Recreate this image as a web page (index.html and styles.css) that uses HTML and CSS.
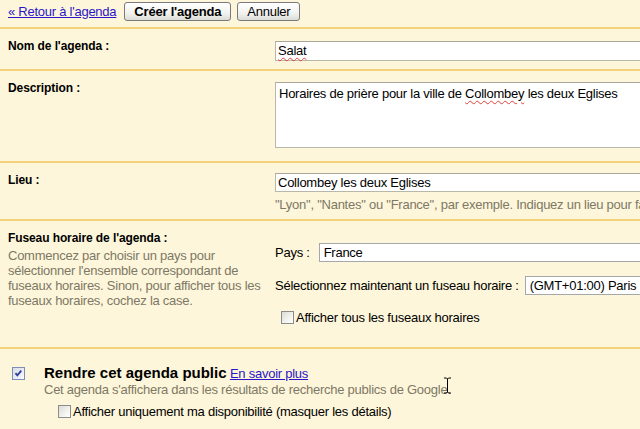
FILE: index.html
```html
<!DOCTYPE html>
<html lang="fr">
<head>
<meta charset="utf-8">
<title>Créer un agenda</title>
<link rel="stylesheet" href="styles.css">
</head>
<body>
<div class="page">
  <div class="topbar">
    <a class="back" href="#">« Retour à l'agenda</a>
    <button class="btn btn-primary">Créer l'agenda</button>
    <button class="btn btn-cancel">Annuler</button>
  </div>

  <div class="row row-name">
    <div class="label">Nom de l'agenda :</div>
    <div class="field">
      <div class="input input-name"><span class="spell">Salat</span></div>
    </div>
  </div>

  <div class="row row-desc">
    <div class="label">Description :</div>
    <div class="field">
      <div class="input textarea">Horaires de prière pour la ville de <span class="spell">Collombey</span> les deux Eglises</div>
    </div>
  </div>

  <div class="row row-place">
    <div class="label">Lieu :</div>
    <div class="field">
      <div class="input input-place">Collombey les deux Eglises</div>
      <div class="hint">"Lyon", "Nantes" ou "France", par exemple. Indiquez un lieu pour faciliter la recherche de votre agenda.</div>
    </div>
  </div>

  <div class="row row-tz">
    <div class="label-block">
      <div class="label">Fuseau horaire de l'agenda :</div>
      <p class="desc">Commencez par choisir un pays pour sélectionner l'ensemble correspondant de fuseaux horaires. Sinon, pour afficher tous les fuseaux horaires, cochez la case.</p>
    </div>
    <div class="field tz-field">
      <div class="tz-line">
        <span class="tz-label">Pays :</span>
        <div class="select select-country">France</div>
      </div>
      <div class="tz-line tz-line-2">
        <span class="tz-label tz-label-zone">Sélectionnez maintenant un fuseau horaire :</span>
        <div class="select select-zone">(GMT+01:00) Paris</div>
      </div>
      <label class="check-line all-zones">
        <span class="cb"></span>
        <span>Afficher tous les fuseaux horaires</span>
      </label>
    </div>
  </div>

  <div class="public">
    <span class="cb cb-checked">
      <svg viewBox="0 0 11 11" width="11" height="11"><path d="M2.5 5.2 L4.3 7.3 L8.3 2.6" fill="none" stroke="#2a3f9e" stroke-width="1.8"/></svg>
    </span>
    <div class="public-text">
      <div class="public-title"><strong>Rendre cet agenda public</strong> <a href="#">En savoir plus</a></div>
      <div class="public-desc">Cet agenda s'affichera dans les résultats de recherche publics de Google.</div>
      <label class="check-line busy">
        <span class="cb"></span>
        <span>Afficher uniquement ma disponibilité (masquer les détails)</span>
      </label>
    </div>
  </div>

  <svg class="cursor" width="9" height="17" viewBox="0 0 9 17"><path d="M1 1 H3.5 L4.5 2 L5.5 1 H8 M4.5 2 V15 M1 16 H3.5 L4.5 15 L5.5 16 H8" fill="none" stroke="#000" stroke-width="1"/></svg>
</div>
</body>
</html>
```

FILE: styles.css
```css
html, body {
  margin: 0;
  padding: 0;
  overflow: hidden;
  background: #fdf6da;
}

.page {
  position: relative;
  width: 640px;
  height: 429px;
  overflow: hidden;
  font-family: "Liberation Sans", Arial, sans-serif;
  font-size: 13px;
  letter-spacing: -0.25px;
  color: #000;
  background: #fdf6da;
}

.topbar {
  height: 29px;
  box-sizing: border-box;
  display: flex;
  align-items: flex-start;
  padding: 2px 0 0 8px;
  gap: 6px;
  border-bottom: 2px solid #f3d27a;
}

.back {
  color: #2a16c8;
  text-decoration: underline;
  font-size: 13px;
  margin-top: 2px;
  margin-right: 2px;
}

.btn {
  font-family: "Liberation Sans", Arial, sans-serif;
  font-size: 13px;
  letter-spacing: -0.25px;
  height: 19px;
  padding: 0 7px;
  border: 1px solid #7a7a7a;
  border-radius: 3px;
  background: linear-gradient(#ffffff, #f2f2f0 60%, #dcdcd6);
  color: #000;
  line-height: 17px;
}

.btn-primary {
  font-weight: bold;
  letter-spacing: -0.2px;
  padding: 0 9px;
}

.btn-cancel {
  padding: 0 9px;
}

.row {
  display: grid;
  grid-template-columns: 267px 1fr;
  box-sizing: border-box;
  border-bottom: 2px solid #f3d27a;
  padding-left: 8px;
}

.label {
  font-weight: bold;
  font-size: 12px;
  letter-spacing: -0.1px;
  line-height: 15px;
}

.row-name { height: 42px; padding-top: 10px; }
.row-name .field { padding-top: 2px; }

.row-desc { height: 92px; padding-top: 10px; }
.row-desc .field { padding-top: 1px; }

.row-place { height: 58px; padding-top: 10px; }

.row-tz { height: 128px; padding-top: 10px; }

.input {
  box-sizing: border-box;
  width: 420px;
  background: #fff;
  border: 1px solid #b9b7a8;
  border-top-color: #a9a797;
  padding: 1px 2px;
  line-height: 16px;
  white-space: nowrap;
}

.input-name { height: 20px; }

.textarea {
  height: 66px;
  padding: 3px 3px;
}

.input-place { height: 19px; }

.spell {
  text-decoration: underline wavy #e0413a;
  text-decoration-thickness: 1px;
  text-underline-offset: 2px;
}

.hint {
  color: #7d7866;
  margin-top: 5px;
  white-space: nowrap;
  line-height: 15px;
}

.desc {
  margin: 2px 0 0;
  color: #7d7866;
  line-height: 15px;
  width: 256px;
}

.tz-field {
  padding-top: 12px;
}

.tz-line {
  display: flex;
  align-items: center;
  white-space: nowrap;
}

.tz-label {
  margin-right: 9px;
}

.tz-label-zone {
  margin-right: 6px;
}

.select {
  box-sizing: border-box;
  height: 19px;
  background: #fff;
  border: 1px solid #a4a8ab;
  padding: 0 4px;
  line-height: 17px;
  white-space: nowrap;
}

.select-country { width: 400px; }
.select-zone { width: 200px; }

.tz-line-2 {
  margin-top: 14px;
}

.check-line {
  display: flex;
  align-items: center;
  gap: 2px;
  white-space: nowrap;
}

.all-zones {
  margin-top: 15px;
  margin-left: 6px;
}

.cb {
  display: inline-flex;
  align-items: center;
  justify-content: center;
  box-sizing: border-box;
  width: 13px;
  height: 13px;
  flex: none;
  border: 1px solid #8c8c8c;
  background: linear-gradient(135deg, #dcdcd6, #f6f6f3 70%, #ffffff);
}

.cb-checked {
  border-color: #7d8fb8;
  background: linear-gradient(135deg, #d9dde8, #eef0f6 70%, #ffffff);
}

.public {
  display: flex;
  align-items: flex-start;
  padding: 18px 0 0 12px;
  gap: 19px;
}

.public-title {
  line-height: 16px;
  margin-top: -2px;
}

.public-title strong {
  font-size: 15px;
  letter-spacing: 0;
}

.public-title a {
  color: #2a16c8;
}

.public-desc {
  color: #7d7866;
  line-height: 15px;
  white-space: nowrap;
}

.busy {
  margin-top: 7px;
  margin-left: 14px;
}

.cursor {
  position: absolute;
  left: 443px;
  top: 377px;
}
```
